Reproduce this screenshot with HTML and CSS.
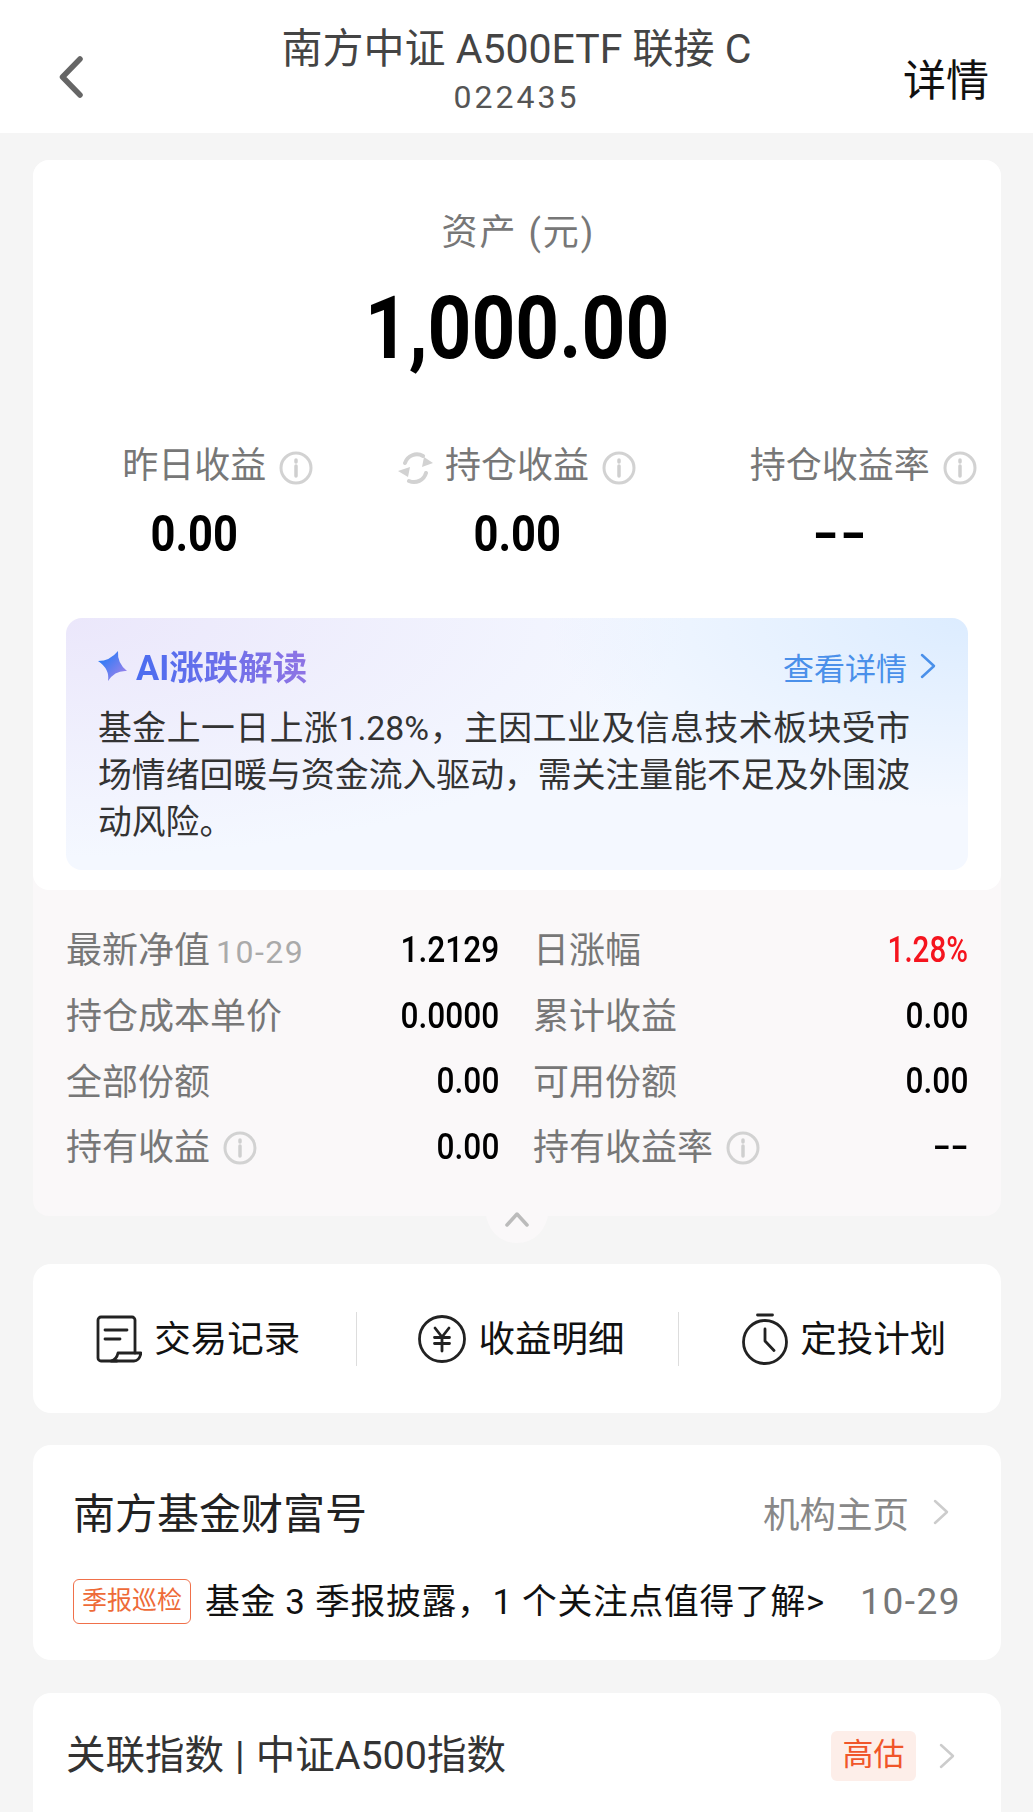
FILE: index.html
```html
<!DOCTYPE html>
<html lang="zh-CN">
<head>
  <meta charset="UTF-8">
  <title>南方中证A500ETF联接C</title>
  <link rel="stylesheet" href="styles.css">
</head>
<body>

<header class="topbar">
  <svg class="back" width="24" height="42" viewBox="0 0 24 42"><path d="M21 3 3.500 21 21 39"/></svg>
  <div class="topbar-title">
    <div class="fund-name">南方中证 A500ETF 联接 C</div>
    <div class="fund-code">022435</div>
  </div>
  <div class="topbar-link">详情</div>
</header>

<main class="page">

  <section class="holdings">
    <div class="summary">
      <div class="asset-label">资产 (元)</div>
      <div class="asset-value"><span class="num">1,000.00</span></div>

      <div class="stats">
        <div class="stat">
          <div class="stat-label"><span class="hint">昨日收益
            <svg class="info info-after" viewBox="0 0 34 34"><circle cx="17" cy="17" r="15"/><path d="M17 15v10M17 9v2"/></svg>
          </span></div>
          <div class="stat-value"><span class="num">0.00</span></div>
        </div>
        <div class="stat">
          <div class="stat-label"><span class="hint">
            <svg class="sync" viewBox="0 0 35 35"><path d="M7 13A12.500 12.500 0 0 1 25 6M28 23A12.500 12.500 0 0 1 11 31"/><path class="sync-head" d="M35 13 24 17 26 7zM0 21 12 17 10 27z"/></svg>
            持仓收益
            <svg class="info info-after" viewBox="0 0 34 34"><circle cx="17" cy="17" r="15"/><path d="M17 15v10M17 9v2"/></svg>
          </span></div>
          <div class="stat-value"><span class="num">0.00</span></div>
        </div>
        <div class="stat">
          <div class="stat-label"><span class="hint">持仓收益率
            <svg class="info info-after" viewBox="0 0 34 34"><circle cx="17" cy="17" r="15"/><path d="M17 15v10M17 9v2"/></svg>
          </span></div>
          <div class="stat-value"><span class="num num-dash">--</span></div>
        </div>
      </div>

      <div class="ai-box">
        <div class="ai-head">
          <div class="ai-title">
            <svg width="30" height="30" viewBox="0 0 30 30">
              <defs>
                <linearGradient id="starFill" x1="0" y1="0" x2="1" y2="1">
                  <stop offset="0.2" stop-color="#2f7bf6"/>
                  <stop offset="1" stop-color="#b184e8"/>
                </linearGradient>
              </defs>
              <path fill="url(#starFill)" d="M0 10Q12 10 20 0 19 12 29 20 17 19 10 30 12 18 0 10Z"/>
            </svg>
            <span class="ai-name">AI涨跌解读</span>
          </div>
          <div class="ai-more">查看详情
            <svg width="16" height="26" viewBox="0 0 16 26"><path d="M2 2 14 13 2 24"/></svg>
          </div>
        </div>
        <p class="ai-text">基金上一日上涨1.28%，主因工业及信息技术板块受市场情绪回暖与资金流入驱动，需关注量能不足及外围波动风险。</p>
      </div>
    </div>

    <div class="details">
      <div class="detail">
        <span class="detail-label">最新净值<small class="detail-date">10-29</small></span>
        <span class="num num-right">1.2129</span>
      </div>
      <div class="detail">
        <span class="detail-label">日涨幅</span>
        <span class="num num-right up">1.28%</span>
      </div>
      <div class="detail">
        <span class="detail-label">持仓成本单价</span>
        <span class="num num-right">0.0000</span>
      </div>
      <div class="detail">
        <span class="detail-label">累计收益</span>
        <span class="num num-right">0.00</span>
      </div>
      <div class="detail">
        <span class="detail-label">全部份额</span>
        <span class="num num-right">0.00</span>
      </div>
      <div class="detail">
        <span class="detail-label">可用份额</span>
        <span class="num num-right">0.00</span>
      </div>
      <div class="detail">
        <span class="detail-label">持有收益
          <svg class="info" viewBox="0 0 34 34"><circle cx="17" cy="17" r="15"/><path d="M17 15v10M17 9v2"/></svg>
        </span>
        <span class="num num-right">0.00</span>
      </div>
      <div class="detail">
        <span class="detail-label">持有收益率
          <svg class="info" viewBox="0 0 34 34"><circle cx="17" cy="17" r="15"/><path d="M17 15v10M17 9v2"/></svg>
        </span>
        <span class="num num-right num-dash">--</span>
      </div>
    </div>

    <div class="collapse-tab">
      <svg width="26" height="16" viewBox="0 0 26 16"><path d="M3 14 13 3 23 14"/></svg>
    </div>
  </section>

  <section class="card actions">
    <div class="action">
      <svg class="action-icon" width="46" height="48" viewBox="0 0 46 48">
        <path d="M21 46H5a3 3 0 0 1-3-3V5a3 3 0 0 1 3-3h31a3 3 0 0 1 3 3v33"/>
        <path d="M15 46c4-1 6-3 7-8h23c-1 5-3 8-7 8zM9 15h22M9 24h15"/>
      </svg>
      <span>交易记录</span>
    </div>
    <div class="action">
      <svg class="action-icon" width="48" height="48" viewBox="0 0 48 48">
        <circle cx="24" cy="24" r="22.500"/>
        <path d="M17 13l7 9 7-9M16.500 22.500h15M16.500 28.500h15M24 22v14"/>
      </svg>
      <span>收益明细</span>
    </div>
    <div class="action">
      <svg class="action-icon" width="46" height="52" viewBox="0 0 46 52">
        <circle cx="23" cy="29" r="21.500"/>
        <path d="M15.500 2h15M23 16v12l9 9.500"/>
      </svg>
      <span>定投计划</span>
    </div>
  </section>

  <section class="card wealth">
    <div class="wealth-head">
      <div class="wealth-title">南方基金财富号</div>
      <div class="wealth-link">机构主页
        <svg class="chevron" width="16" height="28" viewBox="0 0 16 28"><path d="M2 3 14 14 2 25"/></svg>
      </div>
    </div>
    <div class="news">
      <span class="news-tag">季报巡检</span>
      <span class="news-text">基金 3 季报披露，1 个关注点值得了解&gt;</span>
      <span class="news-date">10-29</span>
    </div>
  </section>

  <section class="card index-card">
    <div class="index-name">关联指数<span class="index-sep">|</span>中证A500指数</div>
    <div class="index-side">
      <span class="index-badge">高估</span>
      <svg class="chevron" width="16" height="28" viewBox="0 0 16 28"><path d="M2 3 14 14 2 25"/></svg>
    </div>
  </section>

</main>

</body>
</html>
```

FILE: styles.css
```css
* {
  box-sizing: border-box;
}

html, body {
  margin: 0;
  padding: 0;
}

body {
  width: 1033px;
  height: 1812px;
  overflow: hidden;
  background-color: #f5f5f5;
  font-family: Roboto, "Noto Sans CJK SC", sans-serif;
  color: #111;
}

svg {
  fill: none;
  stroke-linecap: round;
  stroke-linejoin: round;
}

/* top bar */
.topbar {
  height: 133px;
  background-color: #fff;
  display: flex;
  align-items: center;
  justify-content: space-between;
  padding: 0 44px 0 59px;
  position: relative;
}

.back {
  stroke: #666;
  stroke-width: 5.500;
  margin-top: 20px;
}

.topbar-title {
  position: absolute;
  left: 0;
  right: 0;
  top: 22px;
  text-align: center;
  color: #444;
}

.fund-name {
  font-size: 41px;
  line-height: 54px;
}

.fund-code {
  font-size: 32px;
  line-height: 42px;
  letter-spacing: 3px;
  color: #555;
}

.topbar-link {
  font-size: 43px;
  margin-top: 20px;
}

/* main column */
.page {
  padding: 27px 32px 0 33px;
}

.holdings {
  position: relative;
  background-color: #faf8f9;
  border-radius: 16px;
  height: 1056px;
}

.summary {
  background-color: #fff;
  border-radius: 16px;
  height: 730px;
  padding-top: 48px;
}

.asset-label {
  text-align: center;
  font-size: 36px;
  line-height: 50px;
  letter-spacing: 2px;
  padding-left: 3px;
  color: #777;
}

.asset-value {
  text-align: center;
  margin-top: 25px;
  font-size: 88px;
  line-height: 90px;
}

.num {
  display: inline-block;
  transform: scaleX(0.88);
  color: #000;
  font-weight: 500;
}

.asset-value .num,
.stat-value .num {
  font-weight: 700;
  transform: scaleX(0.87);
}

.num-right {
  transform-origin: right center;
  margin-top: 2px;
}

/* the hyphens of the source font are much wider than Roboto's */
.stat-value .num-dash {
  transform: scaleX(1.4);
}

.num-right.num-dash {
  transform: scaleX(1.45);
}

.num-right.up {
  color: #f5141e;
  transform: scaleX(0.82);
}

.stats {
  display: grid;
  grid-template-columns: repeat(3, 1fr);
  margin-top: 68px;
}

.stat {
  text-align: center;
}

.stat-label {
  font-size: 36px;
  line-height: 50px;
  color: #777;
}

.hint {
  position: relative;
  display: inline-block;
}

.info {
  display: inline-block;
  width: 34px;
  height: 34px;
  vertical-align: -5px;
  margin-left: 4px;
  stroke: #d2d2d2;
  stroke-width: 3;
}

.info path {
  stroke: #cfcfcf;
  stroke-width: 3.500;
}

.info-after {
  position: absolute;
  left: 100%;
  top: 10px;
  margin-left: 13px;
}

.sync {
  position: absolute;
  right: 100%;
  top: 9px;
  width: 35px;
  height: 35px;
  margin-right: 12px;
  stroke: #d2d2d2;
  stroke-width: 4;
}

.sync-head {
  fill: #d2d2d2;
  stroke: none;
}

.stat-value {
  margin-top: 13px;
  font-size: 50px;
  line-height: 60px;
}

/* AI box */
.ai-box {
  margin: 54px 33px 0;
  height: 252px;
  border-radius: 16px;
  padding: 24px 32px 0 32px;
  background:
    radial-gradient(ellipse 420px 190px at 100% 0, #dcecff 0, rgba(220, 236, 255, 0) 100%),
    radial-gradient(ellipse 620px 240px at 0 0, #ebe7fb 0, rgba(235, 231, 251, 0) 100%),
    #f4f8ff;
}

.ai-head {
  height: 48px;
  display: flex;
  align-items: center;
  justify-content: space-between;
}

.ai-title {
  display: flex;
  align-items: center;
  gap: 8px;
}

.ai-name {
  font-size: 34.500px;
  font-weight: 700;
  background: linear-gradient(90deg, #4a6cf0, #8f74e4);
  -webkit-background-clip: text;
  background-clip: text;
  color: transparent;
  margin-top: -2px;
}

.ai-more {
  display: flex;
  align-items: center;
  gap: 13px;
  font-size: 31px;
  color: #4a90ea;
}

.ai-more svg {
  stroke: #4a90ea;
  stroke-width: 2.500;
}

.ai-text {
  margin: 16px 0 0;
  width: 812px;
  font-size: 33.800px;
  line-height: 46.800px;
  color: #333;
  text-align: justify;
}

/* details under the summary */
.details {
  display: grid;
  grid-template-columns: 433px 435px;
  column-gap: 34px;
  grid-auto-rows: 65.700px;
  padding: 26px 33px 0;
}

.detail {
  display: flex;
  align-items: center;
  justify-content: space-between;
  font-size: 36px;
}

.detail-label {
  color: #777;
  white-space: nowrap;
  padding-bottom: 3px;
}

.detail-date {
  font-size: 32px;
  color: #aaa;
  letter-spacing: 1.500px;
  margin-left: 6px;
}

.collapse-tab {
  position: absolute;
  left: 50%;
  bottom: -27px;
  width: 62px;
  height: 54px;
  margin-left: -31px;
  border-radius: 0 0 31px 31px;
  background-color: #faf8f9;
  text-align: center;
  padding-top: 22px;
}

.collapse-tab svg {
  stroke: #bbb;
  stroke-width: 3.500;
}

/* plain cards */
.card {
  background-color: #fff;
  border-radius: 18px;
}

.actions {
  margin-top: 48px;
  height: 149px;
  display: grid;
  grid-template-columns: repeat(3, 1fr);
  align-items: center;
}

.action {
  height: 54px;
  display: flex;
  align-items: center;
  justify-content: center;
  gap: 12px;
  font-size: 36.500px;
  color: #111;
  padding-left: 8px;
}

.action span {
  padding-bottom: 4px;
}

.action + .action {
  border-left: 1px solid #ddd;
}

.action-icon {
  stroke: #222;
  stroke-width: 2.800;
}

.wealth {
  margin-top: 32px;
  height: 215px;
  padding: 0 40px 0 40px;
}

.wealth-head {
  height: 134px;
  display: flex;
  align-items: center;
  justify-content: space-between;
}

.wealth-title {
  font-size: 42px;
  color: #222;
  padding-bottom: 4px;
}

.wealth-link {
  display: flex;
  align-items: center;
  gap: 24px;
  font-size: 36.500px;
  color: #888;
  padding-right: 12px;
}

.chevron {
  stroke: #ccc;
  stroke-width: 2.500;
}

.news {
  display: flex;
  align-items: center;
  height: 46px;
  margin-top: -1px;
}

.news-tag {
  width: 118px;
  height: 45px;
  border: 1px solid #f0704a;
  border-radius: 6px;
  font-size: 25px;
  line-height: 42px;
  text-align: center;
  color: #ee6b38;
  flex-shrink: 0;
}

.news-text {
  margin-left: 14px;
  padding-bottom: 4px;
  font-size: 34.800px;
  letter-spacing: 0.700px;
  color: #111;
  white-space: nowrap;
}

.news-date {
  margin-left: auto;
  font-size: 37px;
  color: #777;
  letter-spacing: 1.500px;
}

.index-card {
  margin-top: 33px;
  height: 119px;
  border-radius: 18px 18px 0 0;
  display: flex;
  justify-content: space-between;
  padding: 39px 46px 0 33px;
}

.index-name {
  font-size: 39.500px;
  line-height: 48px;
  color: #333;
}

.index-sep {
  margin: 0 11px;
}

.index-side {
  display: flex;
  align-items: center;
  gap: 23px;
  height: 50px;
  margin-top: -1px;
}

.index-badge {
  width: 85px;
  height: 50px;
  border-radius: 6px;
  background-color: #fdeee9;
  color: #f0562a;
  font-size: 31px;
  line-height: 48px;
  text-align: center;
}
```
